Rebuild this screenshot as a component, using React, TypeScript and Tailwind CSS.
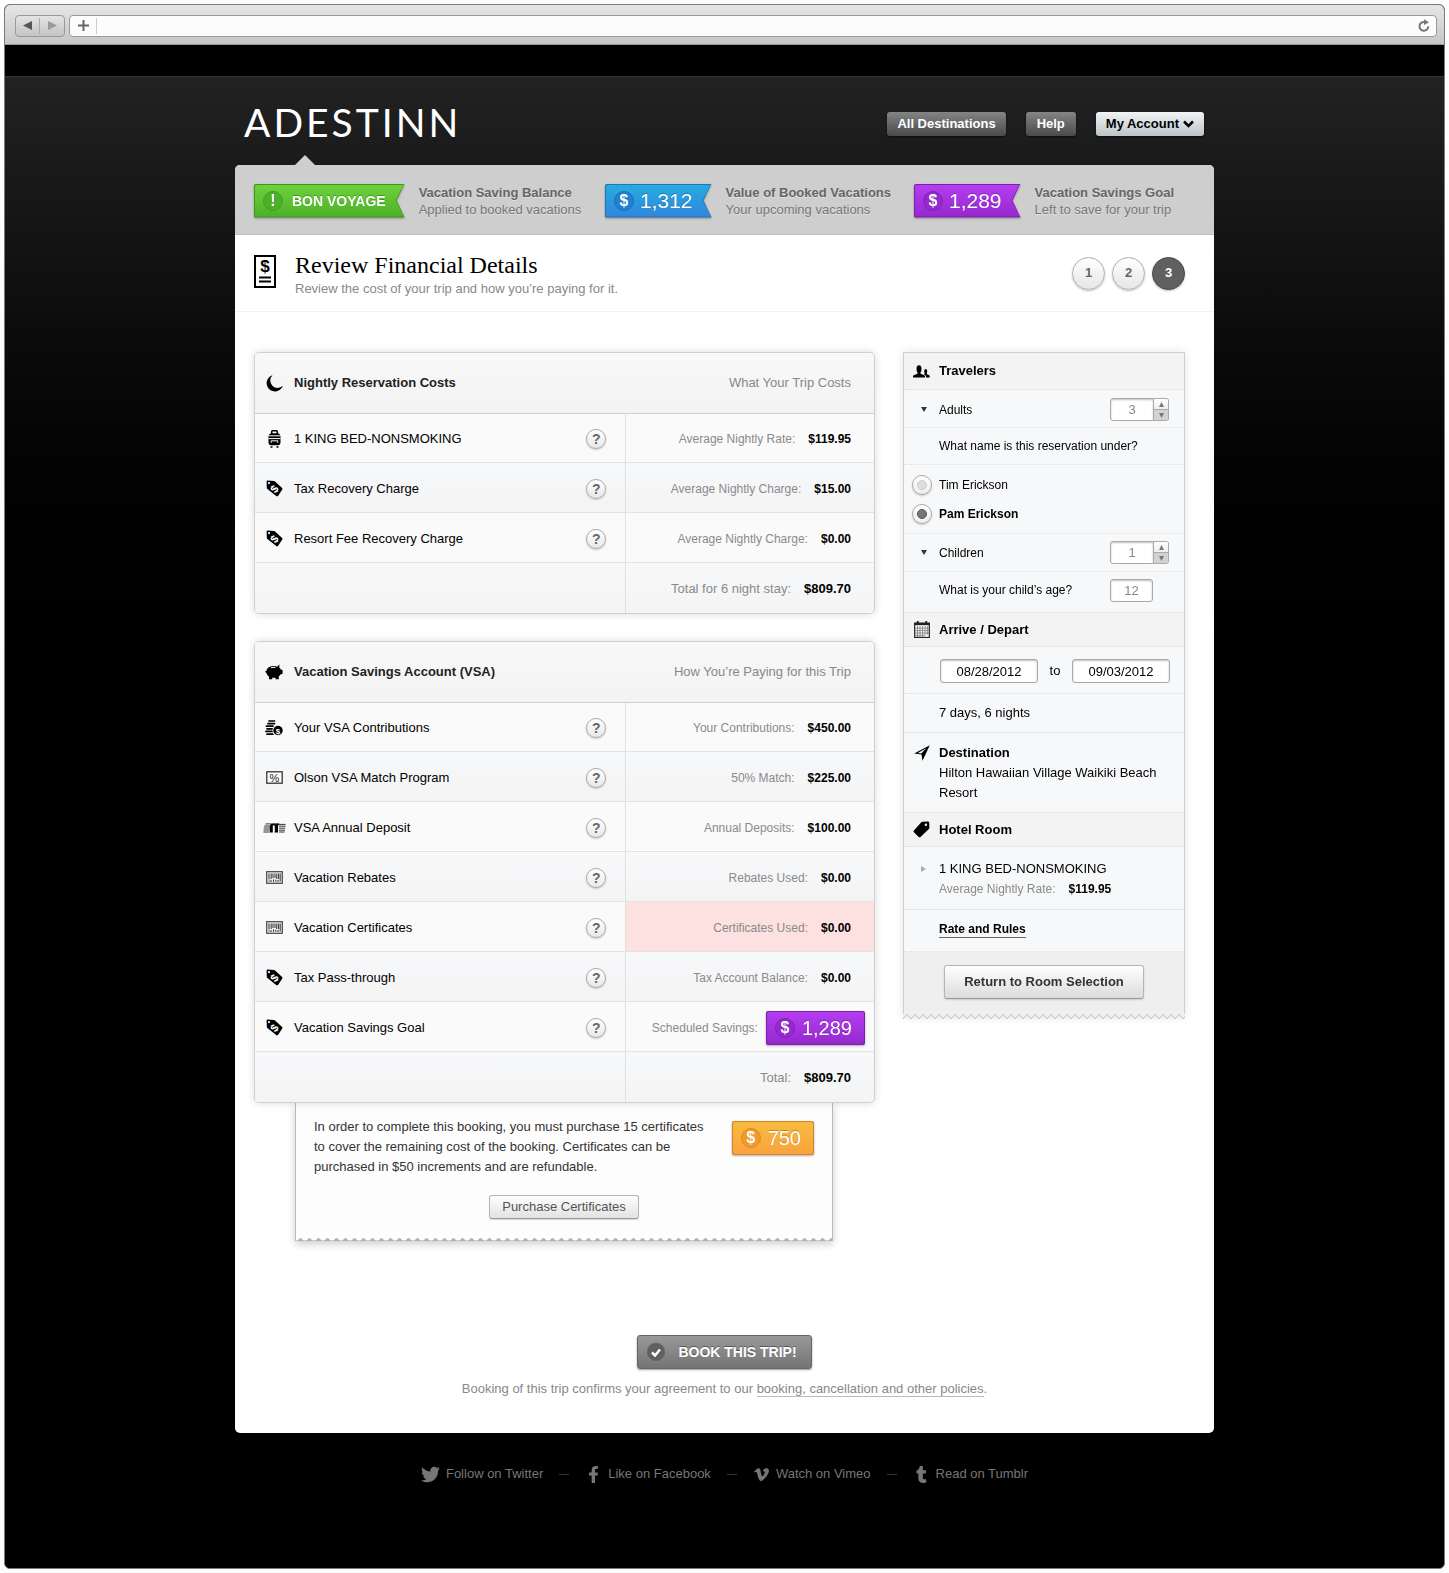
import React, { useState } from "react";
import { FaFacebookF, FaTumblr, FaTwitter, FaVimeoV } from "react-icons/fa";

type IconProps = { children: React.ReactNode; w: number; h: number };

function Glyph({ children, w, h }: IconProps) {
  return (
    <svg aria-hidden="true" width={w} height={h} viewBox={`0 0 ${w} ${h}`} className="shrink-0">
      {children}
    </svg>
  );
}

const MoonIcon = () => (
  <Glyph w={17} h={17}>
    <path d="M6.500.2A8.300 8.300 0 1 0 16.800 10.800 6.300 6.300 0 1 1 6.500.2Z" />
  </Glyph>
);

const LuggageIcon = () => (
  <Glyph w={13} h={18}>
    <path d="M3.700 4V1.600Q3.700.8 4.500.8h4q.8 0 .8.800V4" fill="none" stroke="#000" strokeWidth="1.500" />
    <path d="M2.800 3.200h7.400q2.300 1 2.300 3.400v6.200q0 2.400-2.200 2.400H2.700q-2.200 0-2.200-2.400V6.600q0-2.400 2.300-3.400Z" />
    <path d="M.5 5.800h12M.5 8.600h12" stroke="#fafafa" strokeWidth="1" />
    <path d="M3.200 12.800v-2h6.600v2" fill="none" stroke="#fafafa" strokeWidth="1" />
    <path d="M2.500 16.200h2v1.500h-2zM8.500 16.200h2v1.500h-2z" />
  </Glyph>
);

const PriceTagIcon = () => (
  <Glyph w={17} h={17}>
    <path d="M.6 1.600Q.6.600 1.600.600L8 .900q.6 0 1.100.5l7 6.700q.7.700.2 1.500L12 15.900q-.9.800-1.800.1L1.400 9q-.6-.5-.6-1.100Z" />
    <circle cx="3" cy="3.100" r="1.100" fill="#fff" />
    <text x="8.400" y="12.800" textAnchor="middle" fontSize="11" fontWeight="700" fill="#fff" transform="rotate(-52 8.400 8.900)">$</text>
  </Glyph>
);

const PiggyIcon = () => (
  <Glyph w={18} h={16}>
    <path d="M0 7.200q.8.400 1.300-.2Q2.200 2.300 8 2q2.500-.1 4.300.7Q13 1.300 14.400.6l-.1 2.900q1 .8 1.400 1.900l1.900.5v3.900l-2.100.7q-.6 1.100-1.700 1.800v2.900h-3.200v-1.500q-1.500.3-3.400 0v1.500H4v-2.600Q1.800 11.300 1.300 8.700.4 8.600 0 7.200Z" />
    <path d="M5.800 3.900q2.200-1 4.600-.3" fill="none" stroke="#f6f6f6" strokeWidth="1" />
  </Glyph>
);

const CoinsIcon = () => (
  <Glyph w={18} h={16}>
    <path d="M4 1h5.500M3 3.600h6.500M1.500 6.200h6.500M2 8.800h5.500M1 11.400h6.500M2 14.200h6" stroke="#000" strokeWidth="1.700" strokeLinecap="round" />
    <circle cx="13" cy="10.500" r="5.500" fill="#fafafa" />
    <circle cx="13" cy="10.500" r="4.700" />
    <text x="13" y="13.500" textAnchor="middle" fontSize="8" fontWeight="700" fill="#fff">$</text>
  </Glyph>
);

const PercentIcon = () => (
  <Glyph w={17} h={13}>
    <rect x=".8" y=".8" width="15.400" height="11.400" fill="#fff" stroke="#333" strokeWidth="1.300" />
    <text x="8.500" y="10.500" textAnchor="middle" fontSize="11" fill="#222">%</text>
  </Glyph>
);

const CashIcon = () => (
  <Glyph w={23} h={10}>
    <path d="M2.500 1 7.500.8M1.200 3h6M.8 5h6M.6 7h6M.4 9h6M16 1.400h6.500M16 3.200h6.600M16 5.200h6.200M16 7.200h6M16 9h5.500" stroke="#333" strokeWidth="1" />
    <path d="M8 .4h3.800L9.800 3v6.500H6.800V3Z" />
    <path d="M13.200.4h3.300L15 3v6.500h-3V3Z" />
    <path d="M10 .4h5L12.500 3v6.500h-1V3Z" fill="#111" />
    <path d="M11 3v6.500" stroke="#fafafa" strokeWidth="1" />
  </Glyph>
);

const BarcodeIcon = () => (
  <Glyph w={17} h={13}>
    <rect x=".7" y=".7" width="15.600" height="11.600" fill="#eee" stroke="#444" strokeWidth="1.200" />
    <path d="M3 2.500v6M5.200 2.500v5.500M7 2.500v4.500M9 2.500v4.500M10.800 2.500V8M12.600 2.500v5.500M14.200 2.500v8M3 9.500v1.200M5 9v2M7.500 8.500v2.300M9.800 8.800v2M12 9v2" stroke="#333" strokeWidth="1" />
  </Glyph>
);

const BillIcon = () => (
  <Glyph w={22} h={33}>
    <rect x="1" y="1" width="20" height="31" fill="#fff" stroke="#000" strokeWidth="2" />
    <text x="11" y="17" textAnchor="middle" fontSize="17" fontWeight="700">$</text>
    <path d="M5 22.500h12M5 26.500h12" stroke="#000" strokeWidth="2" />
  </Glyph>
);

const PeopleIcon = () => (
  <Glyph w={17} h={13}>
    <path d="M0 12.500v-1q0-1.100 1.300-1.500l3-1.200q.5-.3.200-1.200Q3.400 6 3.500 3.200 3.700.3 6 .3t2.500 2.900q.1 2.800-1 4.400-.3.900.2 1.200l3 1.200q1.300.4 1.300 1.500v1Z" />
    <path d="M13 12.500v-1.300q-.1-1-1.300-1.500l-.9-.4q.9-.4.900-1.200-.6-.8-.5-2.200.1-1.800 1.500-1.800t1.500 1.800q.1 1.400-.5 2.200 0 .9.400 1.100l1.700.7q.9.400.9 1.400v1.200Z" />
  </Glyph>
);

const CalendarIcon = () => (
  <Glyph w={16} h={17}>
    <rect x=".7" y="2.200" width="14.600" height="14.200" fill="#fff" stroke="#222" strokeWidth="1.200" />
    <path d="M.3 1.800h15.400v2.400H.3z" fill="#222" />
    <path d="M3.800 0v3M12.200 0v3" stroke="#222" strokeWidth="1.800" />
    <path d="M3.500 5v11M6 5v11M8.500 5v11M11 5v9.500M13.400 5v9M1 7.200h14M1 9.600h14M1 12h14M1 14.300h10" stroke="#777" strokeWidth=".8" />
  </Glyph>
);

const ArrowIcon = () => (
  <Glyph w={16} h={16}>
    <path d="M15.800.3 8.500 15.700 7.500 9.600.2 8.400Z" />
    <path d="M12.200 3.200 3.800 8l3.500.5Z" fill="#f7f8fa" />
  </Glyph>
);

const RoomTagIcon = () => (
  <Glyph w={17} h={17}>
    <path d="M8.300 1.300q.5-.5 1.200-.5L15 .6q1.200 0 1.200 1.200L16.400 6.500q0 .8-.5 1.400L7.500 15.900q-.9.800-1.800 0L.9 11.200q-.9-.9 0-1.800Z" />
    <circle cx="12.900" cy="3.800" r="1.200" fill="#f4f4f4" />
  </Glyph>
);

function Triangle({ dir, className }: { dir: "up" | "down" | "left" | "right"; className?: string }) {
  const d = { up: "M0 8 4 0l4 8Z", down: "M0 0h8L4 8Z", left: "M8 0v8L0 4Z", right: "M0 0v8l8-4Z" }[dir];
  return (
    <svg aria-hidden="true" viewBox="0 0 8 8" preserveAspectRatio="none" className={className} fill="currentColor">
      <path d={d} />
    </svg>
  );
}

const tones = {
  green: { edge: "bg-[#3a9a1c]", fill: "bg-linear-to-b from-[#6ed13c] to-[#4cb128]", dot: "bg-[#4cb02a] border-[#43a022]" },
  blue: { edge: "bg-[#2474b4]", fill: "bg-linear-to-b from-[#26abe0] to-[#2f86dc]", dot: "bg-[#2380d0] border-[#1f70ba]" },
  purple: { edge: "bg-[#7c1fae]", fill: "bg-linear-to-b from-[#b43df0] to-[#9628cf]", dot: "bg-[#9429cc] border-[#8422b8]" },
  orange: { edge: "bg-[#d5852b]", fill: "bg-linear-to-b from-[#f6bb3e] to-[#fba23d]", dot: "bg-[#f09a2c] border-[#dd8b24]" },
};

type BadgeProps = { tone: keyof typeof tones; mark: string; text: string; ribbon?: boolean };

function Badge({ tone, mark, text, ribbon }: BadgeProps) {
  const t = tones[tone];
  const shape = ribbon
    ? "rounded-l-xs [clip-path:polygon(0_0,100%_0,calc(100%-8px)_50%,100%_100%,0_100%)]"
    : "rounded-xs";
  return (
    <div className="shrink-0 drop-shadow-[0_1px_1px_rgba(0,0,0,0.3)]">
      <div className={`${shape} ${t.edge} p-px`}>
        <div className={`${shape} ${t.fill} flex h-8 items-center pl-2 ${ribbon ? "gap-[6px] pr-[18px]" : "gap-[7px] pr-3"}`}>
          <span className={`flex size-5 items-center justify-center rounded-full border text-base font-bold text-white ${t.dot}`}>
            {mark}
          </span>
          <span
            className={`text-white [text-shadow:0_-1px_0_rgba(0,0,0,0.25)] ${
              text.includes("VOYAGE") ? "pl-[3px] text-sm font-bold" : ribbon ? "text-[21px] leading-6" : "text-xl leading-6"
            }`}
          >
            {text}
          </span>
        </div>
      </div>
    </div>
  );
}

const balances: { tone: keyof typeof tones; mark: string; value: string; title: string; note: string }[] = [
  { tone: "green", mark: "!", value: "BON VOYAGE", title: "Vacation Saving Balance", note: "Applied to booked vacations" },
  { tone: "blue", mark: "$", value: "1,312", title: "Value of Booked Vacations", note: "Your upcoming vacations" },
  { tone: "purple", mark: "$", value: "1,289", title: "Vacation Savings Goal", note: "Left to save for your trip" },
];

type Row = { icon?: React.ReactNode; name?: string; label: string; value?: string; badge?: boolean; alert?: boolean };

const costRows: Row[] = [
  { icon: <LuggageIcon />, name: "1 KING BED-NONSMOKING", label: "Average Nightly Rate:", value: "$119.95" },
  { icon: <PriceTagIcon />, name: "Tax Recovery Charge", label: "Average Nightly Charge:", value: "$15.00" },
  { icon: <PriceTagIcon />, name: "Resort Fee Recovery Charge", label: "Average Nightly Charge:", value: "$0.00" },
  { label: "Total for 6 night stay:", value: "$809.70" },
];

const savingRows: Row[] = [
  { icon: <CoinsIcon />, name: "Your VSA Contributions", label: "Your Contributions:", value: "$450.00" },
  { icon: <PercentIcon />, name: "Olson VSA Match Program", label: "50% Match:", value: "$225.00" },
  { icon: <CashIcon />, name: "VSA Annual Deposit", label: "Annual Deposits:", value: "$100.00" },
  { icon: <BarcodeIcon />, name: "Vacation Rebates", label: "Rebates Used:", value: "$0.00" },
  { icon: <BarcodeIcon />, name: "Vacation Certificates", label: "Certificates Used:", value: "$0.00", alert: true },
  { icon: <PriceTagIcon />, name: "Tax Pass-through", label: "Tax Account Balance:", value: "$0.00" },
  { icon: <PriceTagIcon />, name: "Vacation Savings Goal", label: "Scheduled Savings:", badge: true },
  { label: "Total:", value: "$809.70" },
];

function CostTable({ icon, title, caption, rows }: { icon: React.ReactNode; title: string; caption: string; rows: Row[] }) {
  return (
    <div className="relative overflow-hidden rounded-[5px] border border-[#cfcfcf] bg-[#f8f8f8] shadow-[0_0_8px_rgba(0,0,0,0.14)]">
      <table className="w-full table-fixed border-separate border-spacing-0 text-[13px]">
        <thead>
          <tr className="h-[61px] bg-linear-to-b from-[#f8f8f8] to-[#f3f3f3]">
            <th scope="col" className="w-[60%] border-b border-[#cfcfcf] p-0 text-left font-bold text-[#222]">
              <span className="flex items-center gap-2 pl-[7px]">
                <span className="flex w-6 justify-center">{icon}</span>
                {title}
              </span>
            </th>
            <th scope="col" className="border-b border-[#cfcfcf] py-0 pr-[23px] text-right font-normal text-[#888]">
              {caption}
            </th>
          </tr>
        </thead>
        <tbody>
          {rows.map((row, i) => {
            const line = i < rows.length - 1 ? "border-b border-[#e3e3e3]" : "";
            return (
              <tr
                key={row.name ?? row.label}
                className={`${i ? "h-[50px]" : "h-[49px]"} ${i % 2 ? "bg-linear-to-b from-[#f7f8fa] to-[#f4f4f4]" : "bg-[#fafafa]"}`}
              >
                <td className={`border-r border-r-[#e0e0e0] p-0 pt-0.5 ${line}`}>
                  {row.name && (
                    <div className="flex items-center gap-2 pr-[19px] pl-[7px]">
                      <span className="flex w-6 justify-center">{row.icon}</span>
                      <span className="flex-1">{row.name}</span>
                      <button
                        type="button"
                        aria-label={`Help with ${row.name}`}
                        className="flex size-5 items-center justify-center rounded-full border border-[#aaa] bg-linear-to-b from-white to-[#e8e8e8] text-sm font-bold text-[#666] shadow-[0_1px_2px_rgba(0,0,0,0.2)]"
                      >
                        ?
                      </button>
                    </div>
                  )}
                </td>
                <td className={`p-0 pt-0.5 ${line} ${row.alert ? "bg-[#fde0e0]" : ""}`}>
                  <div
                    className={`flex items-center justify-end ${row.badge ? "gap-2 pr-[9px]" : "gap-[13px] pr-[23px]"} ${
                      row.name ? "text-xs" : "text-[13px]"
                    }`}
                  >
                    <span className="text-[#8a8a8a]">{row.label}</span>
                    {row.badge ? <Badge tone="purple" mark="$" text="1,289" /> : <b>{row.value}</b>}
                  </div>
                </td>
              </tr>
            );
          })}
        </tbody>
      </table>
    </div>
  );
}

const field =
  "rounded-[3px] border border-[#a9a9a9] bg-white text-center text-[13px] shadow-[inset_0_1px_2px_rgba(0,0,0,0.25)] outline-none";

function Stepper({ id, value, onChange }: { id: string; value: number; onChange: (n: number) => void }) {
  return (
    <div className="flex h-[23px] w-[59px]">
      <input
        id={id}
        inputMode="numeric"
        value={value}
        onChange={(e) => onChange(Number(e.target.value) || 0)}
        className="w-[44px] rounded-l-[3px] border border-[#a9a9a9] bg-white text-center text-[13px] text-[#888] shadow-[inset_0_1px_2px_rgba(0,0,0,0.25)] outline-none"
      />
      <div className="flex flex-1 flex-col overflow-hidden rounded-r-[3px] border border-l-0 border-[#a9a9a9] text-[#777]">
        <button type="button" aria-label="Increase" onClick={() => onChange(value + 1)} className="flex flex-1 items-center justify-center border-b border-[#a9a9a9] bg-linear-to-b from-white to-[#eee]">
          <Triangle dir="up" className="size-[5px]" />
        </button>
        <button type="button" aria-label="Decrease" onClick={() => onChange(Math.max(0, value - 1))} className="flex flex-1 items-center justify-center bg-[#d2d2d2]">
          <Triangle dir="down" className="size-[5px]" />
        </button>
      </div>
    </div>
  );
}

function PanelHead({ icon, title }: { icon: React.ReactNode; title: string }) {
  return (
    <div className="flex items-center border-b border-dotted border-[#ddd] bg-[#f3f3f3]">
      <span className="flex w-[35px] justify-center">{icon}</span>
      <h2 className="text-[13px] font-bold">{title}</h2>
    </div>
  );
}

function TripPanel() {
  const [adults, setAdults] = useState(3);
  const [children, setChildren] = useState(1);
  const [holder, setHolder] = useState("Pam Erickson");
  return (
    <aside className="self-start drop-shadow-[0_0_4px_rgba(0,0,0,0.1)]">
      <div className="grid grid-rows-[37px_38px_37px_69px_38px_41px_34px_47px_39px_80px_34px_63px_42px_auto] border-x border-t border-[#cfcfcf] bg-[#f7f8fa] text-xs">
        <PanelHead icon={<PeopleIcon />} title="Travelers" />
        <div className="flex items-center border-b border-[#ececec] pt-0.5 pr-[15px]">
          <button type="button" aria-label="Toggle adults" className="flex w-[35px] justify-center pl-1 text-[#333]">
            <Triangle dir="down" className="h-[5px] w-[6px]" />
          </button>
          <label htmlFor="adults" className="flex-1">Adults</label>
          <Stepper id="adults" value={adults} onChange={setAdults} />
        </div>
        <p className="flex items-center border-b border-dotted border-[#ddd] pl-[35px]">What name is this reservation under?</p>
        <div role="radiogroup" aria-label="Reservation name" className="flex flex-col justify-center gap-[9px] border-b border-[#ececec] pl-2">
          {["Tim Erickson", "Pam Erickson"].map((name) => (
            <label key={name} className={`flex items-center gap-[7px] ${holder === name ? "font-bold" : ""}`}>
              <input
                type="radio"
                name="holder"
                checked={holder === name}
                onChange={() => setHolder(name)}
                className="flex size-5 appearance-none items-center justify-center rounded-full border border-[#aaa] bg-linear-to-b from-white to-[#eee] shadow-[0_1px_2px_rgba(0,0,0,0.2)] before:size-[10px] before:rounded-full before:border before:border-[#ccc] before:bg-[#ddd] checked:before:border-[#555] checked:before:bg-[#777]"
              />
              {name}
            </label>
          ))}
        </div>
        <div className="flex items-center border-b border-[#ececec] pr-[15px]">
          <button type="button" aria-label="Toggle children" className="flex w-[35px] justify-center pl-1 text-[#333]">
            <Triangle dir="down" className="h-[5px] w-[6px]" />
          </button>
          <label htmlFor="children" className="flex-1">Children</label>
          <Stepper id="children" value={children} onChange={setChildren} />
        </div>
        <div className="flex items-center border-b border-[#e6e6e6] pr-[31px] pb-1 pl-[35px]">
          <label htmlFor="age" className="flex-1">What is your child’s age?</label>
          <input id="age" defaultValue="12" className={`h-[23px] w-[43px] text-[#888] ${field}`} />
        </div>
        <PanelHead icon={<CalendarIcon />} title="Arrive / Depart" />
        <div className="flex items-center justify-between border-b border-dotted border-[#ddd] pt-0.5 pr-3.5 pl-9 text-[13px]">
          <input aria-label="Arrival date" defaultValue="08/28/2012" className={`h-6 w-[98px] ${field}`} />
          <span>to</span>
          <input aria-label="Departure date" defaultValue="09/03/2012" className={`h-6 w-[98px] ${field}`} />
        </div>
        <p className="flex items-center border-b border-[#e6e6e6] pl-[35px] text-[13px]">7 days, 6 nights</p>
        <div className="flex items-center border-b border-[#e6e6e6] text-[13px] leading-5">
          <span className="mt-3 flex w-[35px] shrink-0 justify-center self-start">
            <ArrowIcon />
          </span>
          <div>
            <h2 className="font-bold">Destination</h2>
            <p>Hilton Hawaiian Village Waikiki Beach Resort</p>
          </div>
        </div>
        <PanelHead icon={<RoomTagIcon />} title="Hotel Room" />
        <div className="flex items-center border-b border-[#e6e6e6] pt-0.5 text-[13px] leading-5">
          <button type="button" aria-label="Toggle room" className="mt-[17px] flex w-[35px] shrink-0 justify-center self-start pl-1 text-[#aaa]">
            <Triangle dir="right" className="h-[6px] w-[5px]" />
          </button>
          <div>
            <p>1 KING BED-NONSMOKING</p>
            <p className="flex gap-[13px] text-xs leading-5">
              <span className="text-[#8a8a8a]">Average Nightly Rate:</span>
              <b>$119.95</b>
            </p>
          </div>
        </div>
        <div className="flex items-center border-b border-dotted border-[#ddd] pb-0.5 pl-[35px]">
          <a href="#rules" className="border-b border-[#666] text-xs leading-4 font-bold">Rate and Rules</a>
        </div>
        <div className="flex justify-center bg-[#efefef] pt-[13px] pb-[15px]">
          <button
            type="button"
            className="h-[34px] w-[200px] rounded-[3px] border border-[#b5b5b5] border-b-[#999] bg-linear-to-b from-white to-[#dcdcdc] text-[13px] font-bold text-[#333] shadow-[0_1px_2px_rgba(0,0,0,0.15)]"
          >
            Return to Room Selection
          </button>
        </div>
      </div>
      <svg aria-hidden="true" className="block h-[6px] w-full">
        <defs>
          <pattern id="zigzag" width="8" height="6" patternUnits="userSpaceOnUse">
            <path d="M0 0v5L4 .5 8 5V0Z" fill="#efefef" />
            <path d="M-1 4 0 5 4 .5 8 5l1-1" fill="none" stroke="#bdbdbd" />
          </pattern>
        </defs>
        <rect width="100%" height="6" fill="url(#zigzag)" />
      </svg>
    </aside>
  );
}

const networks = [
  { icon: <FaTwitter className="size-[19px]" />, text: "Follow on Twitter" },
  { icon: <FaFacebookF className="size-[17px]" />, text: "Like on Facebook" },
  { icon: <FaVimeoV className="size-[17px]" />, text: "Watch on Vimeo" },
  { icon: <FaTumblr className="size-[17px]" />, text: "Read on Tumblr" },
];

const navButton = "flex h-6 items-center rounded-[3px] text-[13px] font-bold shadow-[0_1px_2px_rgba(0,0,0,0.6)]";

export default function App() {
  const [step, setStep] = useState(3);
  return (
    <div className="flex min-h-screen flex-col bg-[#fdfdfd] p-1 font-['Liberation_Sans',Arial,sans-serif] text-black">
      <div className="flex flex-1 flex-col overflow-hidden rounded-md border border-[#7a7a7a] bg-black">
        <div className="flex h-10 items-center gap-1 border-b border-[#999] bg-linear-to-b from-[#e6e6e6] to-[#c6c6c6] pt-0.5 pr-[7px] pl-2.5">
          <div className="flex h-[22px] items-center rounded border border-[#999] bg-linear-to-b from-[#e4e4e4] to-[#c4c4c4]">
            <button type="button" aria-label="Back" className="flex h-4 w-6 items-center justify-center border-r border-[#aaa] text-[#555]">
              <Triangle dir="left" className="h-[9px] w-[9px]" />
            </button>
            <button type="button" aria-label="Forward" className="flex h-4 w-6 items-center justify-center text-[#999]">
              <Triangle dir="right" className="h-[9px] w-[9px]" />
            </button>
          </div>
          <div className="flex h-[22px] flex-1 items-center rounded border border-[#999] bg-[#fcfcfc]">
            <button type="button" aria-label="Add bookmark" className="flex h-4 w-[27px] items-center justify-center border-r border-[#ccc]">
              <Glyph w={11} h={11}>
                <path d="M5.500 0v11M0 5.500h11" stroke="#666" strokeWidth="2" />
              </Glyph>
            </button>
            <input aria-label="Address" className="h-full min-w-0 flex-1 bg-transparent px-2 text-[13px] outline-none" />
            <button type="button" aria-label="Reload" className="flex w-6 items-center justify-center">
              <Glyph w={12} h={13}>
                <path d="M10.300 7.300A4.400 4.400 0 1 1 7 3.100" fill="none" stroke="#777" strokeWidth="2" />
                <path d="M6 .2 11 3.200 6 6Z" fill="#777" />
              </Glyph>
            </button>
          </div>
        </div>
        <div className="h-8 border-b border-[#333] bg-black" />
        <div className="flex flex-1 flex-col bg-linear-to-b from-[#222] to-black to-[650px] px-4">
          <header className="mx-auto flex h-[88px] w-full max-w-[979px] items-center justify-between pr-[10px] pl-[9px]">
            <a href="#home" className="pt-0.5 font-[Lato] text-[39px] leading-none tracking-[3px] text-white">ADESTINN</a>
            <nav className="flex gap-5 pt-[5px]">
              <a href="#destinations" className={`${navButton} bg-linear-to-b from-[#858585] to-[#4a4a4a] px-[10px] text-white`}>All Destinations</a>
              <a href="#help" className={`${navButton} bg-linear-to-b from-[#858585] to-[#4a4a4a] px-[11px] text-white`}>Help</a>
              <button type="button" className={`${navButton} gap-1 bg-linear-to-b from-[#f2f4f5] to-[#bcc4c8] px-[10px]`}>
                My Account
                <Glyph w={11} h={8}>
                  <path d="m1 1.500 4.500 4.500L10 1.500" fill="none" stroke="#000" strokeWidth="2.500" />
                </Glyph>
              </button>
            </nav>
          </header>

          <main className="relative mx-auto w-full max-w-[979px] rounded-[5px] bg-white">
            <svg aria-hidden="true" width="22" height="11" className="absolute -top-2.5 left-[59px]">
              <path d="M0 11 11 0l11 11Z" fill="#cecece" />
            </svg>
            <section className="grid h-[70px] grid-cols-[351fr_309fr_281fr] items-center rounded-t-[5px] border-b border-[#bfbfbf] bg-[#cecece] px-[19px] pt-0.5 text-[13px] leading-[17px]">
              {balances.map((b) => (
                <div key={b.title} className="flex items-center gap-[14px]">
                  <Badge tone={b.tone} mark={b.mark} text={b.value} ribbon />
                  <div className="whitespace-nowrap [text-shadow:0_1px_0_rgba(255,255,255,0.4)]">
                    <p className="font-bold text-[#666]">{b.title}</p>
                    <p className="text-[#777]">{b.note}</p>
                  </div>
                </div>
              ))}
            </section>

            <section className="flex h-[77px] items-center justify-between border-b border-[#f2f2f2] pr-[29px] pl-[19px]">
              <div className="flex items-start gap-[19px] pt-[7px]">
                <BillIcon />
                <div className="-mt-1">
                  <h1 className="font-['Liberation_Serif',serif] text-2xl leading-7">Review Financial Details</h1>
                  <p className="text-[13px] leading-5 text-[#888]">Review the cost of your trip and how you’re paying for it.</p>
                </div>
              </div>
              <ol className="flex gap-[7px]">
                {[1, 2, 3].map((n) => (
                  <li key={n}>
                    <button
                      type="button"
                      onClick={() => setStep(n)}
                      className={`size-[33px] rounded-full border text-[13px] font-bold shadow-[0_1px_2px_rgba(0,0,0,0.25)] ${
                        step === n ? "border-[#484848] bg-[#606060] text-white" : "border-[#b0b0b0] bg-linear-to-b from-white to-[#e6e6e6] text-[#666]"
                      }`}
                    >
                      {n}
                    </button>
                  </li>
                ))}
              </ol>
            </section>

            <div className="grid grid-cols-[minmax(0,1fr)_282px] gap-7 pt-10 pr-[29px] pl-[19px]">
              <div className="relative">
                <CostTable icon={<MoonIcon />} title="Nightly Reservation Costs" caption="What Your Trip Costs" rows={costRows} />
                <div className="relative z-10 mt-[27px]">
                  <CostTable icon={<PiggyIcon />} title="Vacation Savings Account (VSA)" caption="How You’re Paying for this Trip" rows={savingRows} />
                </div>
                <section className="mr-[42px] ml-[41px] border-x border-[#bbb] bg-[#fdfdfd] shadow-[0_3px_8px_rgba(0,0,0,0.2)]">
                  <div className="px-[18px] pt-[14px] pb-[17px]">
                    <div className="flex items-start justify-between">
                      <p className="w-[394px] text-[13px] leading-5 text-[#333]">
                        In order to complete this booking, you must purchase 15 certificates to cover the remaining cost of the booking. Certificates can be
                        purchased in $50 increments and are refundable.
                      </p>
                      <div className="pt-1">
                        <Badge tone="orange" mark="$" text="750" />
                      </div>
                    </div>
                    <div className="flex justify-center pt-[18px]">
                      <button
                        type="button"
                        className="h-6 rounded-[3px] border border-[#b5b5b5] border-b-[#999] bg-linear-to-b from-white to-[#e2e2e2] px-3 text-[13px] text-[#555] shadow-[0_1px_1px_rgba(0,0,0,0.15)]"
                      >
                        Purchase Certificates
                      </button>
                    </div>
                  </div>
                  <svg aria-hidden="true" className="block h-[5px] w-full">
                    <defs>
                      <pattern id="scallop" width="9" height="5" patternUnits="userSpaceOnUse">
                        <path d="M0 4.500Q2 4.500 3 3q1.500-2 3 0 1 1.500 3 1.500V5H0Z" fill="#b0b0b0" />
                      </pattern>
                    </defs>
                    <rect width="100%" height="5" fill="url(#scallop)" />
                  </svg>
                </section>
              </div>
              <TripPanel />
            </div>

            <div className="flex flex-col items-center pt-[94px] pb-[34px]">
              <button
                type="button"
                className="flex h-[34px] items-center gap-3 rounded-[3px] border border-[#666] bg-linear-to-b from-[#999] to-[#747474] pr-[14px] pl-2 text-sm font-bold text-white shadow-[0_1px_2px_rgba(0,0,0,0.4)] [text-shadow:0_-1px_0_rgba(0,0,0,0.4)]"
              >
                <span className="flex size-5 items-center justify-center rounded-full border border-[#888] bg-[#606060]">
                  <Glyph w={10} h={9}>
                    <path d="m1 4.500 3 3L9 1.500" fill="none" stroke="#fff" strokeWidth="2.500" />
                  </Glyph>
                </span>
                BOOK THIS TRIP!
              </button>
              <p className="pt-[10px] text-[13px] leading-5 text-[#888]">
                Booking of this trip confirms your agreement to our{" "}
                <a href="#policies" className="border-b border-[#bbb]">booking, cancellation and other policies</a>.
              </p>
            </div>
          </main>

          <footer className="flex items-center justify-center gap-4 pt-[31px] pb-9 text-[13px] leading-5 text-[#777]">
            {networks.map((n, i) => (
              <React.Fragment key={n.text}>
                {i > 0 && <span aria-hidden="true" className="h-px w-2.5 bg-[#333]" />}
                <a href="#social" className="flex items-center gap-[6px]">
                  {n.icon}
                  {n.text}
                </a>
              </React.Fragment>
            ))}
          </footer>
        </div>
      </div>
    </div>
  );
}
